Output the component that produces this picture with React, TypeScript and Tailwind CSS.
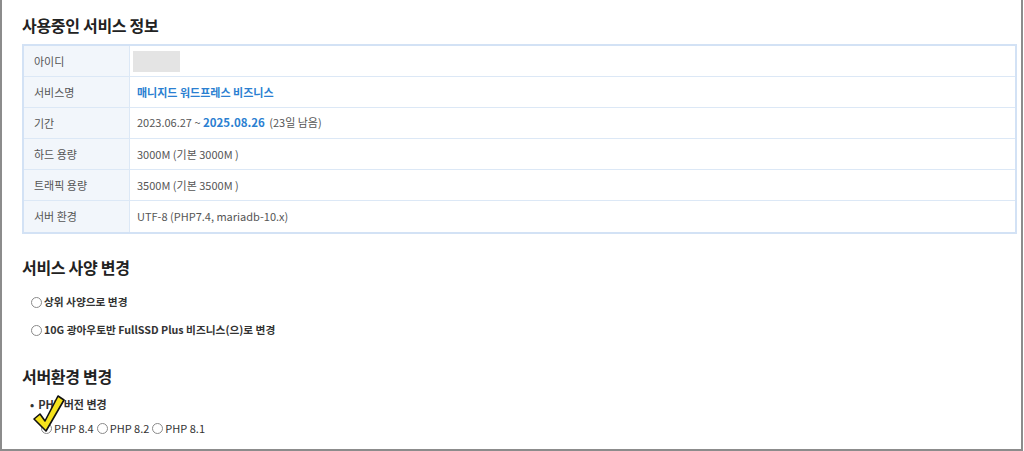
import React from "react";

const font = { fontFamily: '"Noto Sans CJK KR", "Noto Sans", sans-serif' };

function Radio({ className = "" }: { className?: string }) {
  return (
    <span
      className={`inline-block w-[11px] h-[11px] rounded-full border border-[#8a8a8a] bg-white ${className}`}
    />
  );
}

function Row({ label, children, last }: { label: string; children: React.ReactNode; last?: boolean }) {
  return (
    <div className={`flex h-[31px] ${last ? "" : "border-b border-[#dce8f6]"}`}>
      <div className="w-[106px] shrink-0 bg-[#f2f6fb] border-r border-[#dce8f6] flex items-center pl-[10px] text-[11px] text-[#555]">
        {label}
      </div>
      <div className="flex-1 flex items-center pl-[7px] text-[11px] text-[#555]">{children}</div>
    </div>
  );
}

export default function App() {
  return (
    <div style={font} className="w-[1023px] h-[451px] bg-white border-l-2 border-r-2 border-b-2 border-[#8c8c8c] relative overflow-hidden">
      <div className="pl-[20px] pr-[4px] pt-[13px]">
        <h2 className="text-[16px] font-bold text-[#222] leading-[24px] tracking-[-0.3px]">사용중인 서비스 정보</h2>
        <div className="mt-[7px] border-2 border-[#d3e2f5]">
          <Row label="아이디">
            <span className="inline-block w-[47px] h-[21px] bg-[#e4e4e4] ml-[-4px]" />
          </Row>
          <Row label="서비스명">
            <span className="font-bold text-[#2b7fd1]">매니지드 워드프레스 비즈니스</span>
          </Row>
          <Row label="기간">
            <span>
              2023.06.27 ~ <b className="text-[#2b7fd1] text-[11.5px]">2025.08.26</b> <span className="ml-[2px]">(23일 남음)</span>
            </span>
          </Row>
          <Row label="하드 용량">3000M (기본 3000M )</Row>
          <Row label="트래픽 용량">3500M (기본 3500M )</Row>
          <Row label="서버 환경" last>UTF-8 (PHP7.4, mariadb-10.x)</Row>
        </div>

        <h2 className="mt-[21px] text-[16px] font-bold text-[#222] leading-[24px] tracking-[-0.3px]">서비스 사양 변경</h2>
        <div className="mt-[15px] pl-[9px] flex items-center gap-[2px] text-[10.7px] font-bold text-[#333] h-[16px]">
          <Radio />
          <span>상위 사양으로 변경</span>
        </div>
        <div className="mt-[12px] pl-[9px] flex items-center gap-[2px] text-[10.7px] font-bold text-[#333] h-[16px]">
          <Radio />
          <span>10G 광아우토반 FullSSD Plus 비즈니스(으)로 변경</span>
        </div>

        <h2 className="mt-[26px] text-[16px] font-bold text-[#222] leading-[24px] tracking-[-0.3px]">서버환경 변경</h2>
        <div className="mt-[8px] pl-[8px] text-[11px] font-bold text-[#333] h-[16px] flex items-center">
          <span className="mr-[4px]">•</span>
          <span>PHP 버전 변경</span>
        </div>
        <div className="mt-[8px] pl-[19px] flex items-center text-[11px] text-[#333] h-[16px]" >
          <Radio className="mr-[2px]" />
          <span className="mr-[3px]">PHP 8.4</span>
          <Radio className="mr-[2px]" />
          <span className="mr-[3px]">PHP 8.2</span>
          <Radio className="mr-[2px]" />
          <span>PHP 8.1</span>
        </div>
      </div>
      <svg className="absolute left-[30px] top-[394px]" width="34" height="40" viewBox="0 0 34 40">
        <path
          d="M2 25 L8 20 L13 27 L26 2 L32 6 L14 37 Z"
          fill="#f5e21c"
          stroke="#111"
          strokeWidth="1.6"
          strokeLinejoin="round"
        />
      </svg>
    </div>
  );
}
